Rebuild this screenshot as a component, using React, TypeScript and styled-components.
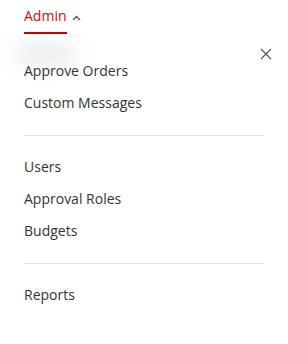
import React from "react";
import styled, { createGlobalStyle } from "styled-components";

const Global = createGlobalStyle`
  html, body { margin: 0; padding: 0; background: #fff; }
  body { font-family: "Open Sans", "Noto Sans", sans-serif; color: #333; }
`;

const Page = styled.div`
  width: 288px;
  height: 344px;
  overflow: hidden;
  background: #fff;
`;

const Header = styled.div`
  display: flex;
  padding: 6px 0 0 24px;
`;

const Tab = styled.div`
  position: relative;
  display: flex;
  align-items: flex-start;
  gap: 5px;
`;

const TabLabel = styled.div`
  display: flex;
  flex-direction: column;
  gap: 6px;
  font-size: 14px;
  line-height: 20px;
  color: #d10a0a;
  &::after {
    content: "";
    display: block;
    height: 2px;
    background: #cc0000;
  }
`;

const Chevron = styled.svg`
  margin-top: 9px;
  width: 9px;
  height: 6px;
`;

const Glow = styled.div`
  position: absolute;
  left: -12px;
  top: 38px;
  width: 66px;
  height: 20px;
  border-radius: 50%;
  background: rgba(0, 0, 0, 0.085);
  filter: blur(10px);
  pointer-events: none;
`;

const Panel = styled.div`
  position: relative;
  margin-top: 21px;
  padding: 0 24px;
`;

const Close = styled.button`
  position: absolute;
  top: -8px;
  right: 16px;
  width: 13px;
  height: 13px;
  padding: 0;
  border: 0;
  background: none;
  display: flex;
  align-items: center;
  justify-content: center;
`;

const Group = styled.ul`
  list-style: none;
  margin: 0;
  padding: 0;
`;

const Item = styled.li`
  font-size: 14px;
  line-height: 32px;
  color: #333;
`;

const Divider = styled.hr`
  border: 0;
  height: 1px;
  background: #e0e0e0;
  margin: 16px 0 15px;
`;

const groups = [
  ["Approve Orders", "Custom Messages"],
  ["Users", "Approval Roles", "Budgets"],
  ["Reports"],
];

export default function App() {
  return (
    <Page>
      <Global />
      <Header>
        <Tab>
          <TabLabel>Admin</TabLabel>
          <Chevron viewBox="0 0 9 6">
            <path d="M1 5 L4.5 1.5 L8 5" fill="none" stroke="#555" strokeWidth="1.4" />
          </Chevron>
          <Glow />
        </Tab>
      </Header>
      <Panel>
        <Close aria-label="Close">
          <svg width="12" height="12" viewBox="0 0 12 12">
            <path d="M1 1 L11 11 M11 1 L1 11" stroke="#555" strokeWidth="1.2" fill="none" />
          </svg>
        </Close>
        {groups.map((g, i) => (
          <React.Fragment key={i}>
            {i > 0 && <Divider />}
            <Group>
              {g.map((t) => (
                <Item key={t}>{t}</Item>
              ))}
            </Group>
          </React.Fragment>
        ))}
      </Panel>
    </Page>
  );
}
